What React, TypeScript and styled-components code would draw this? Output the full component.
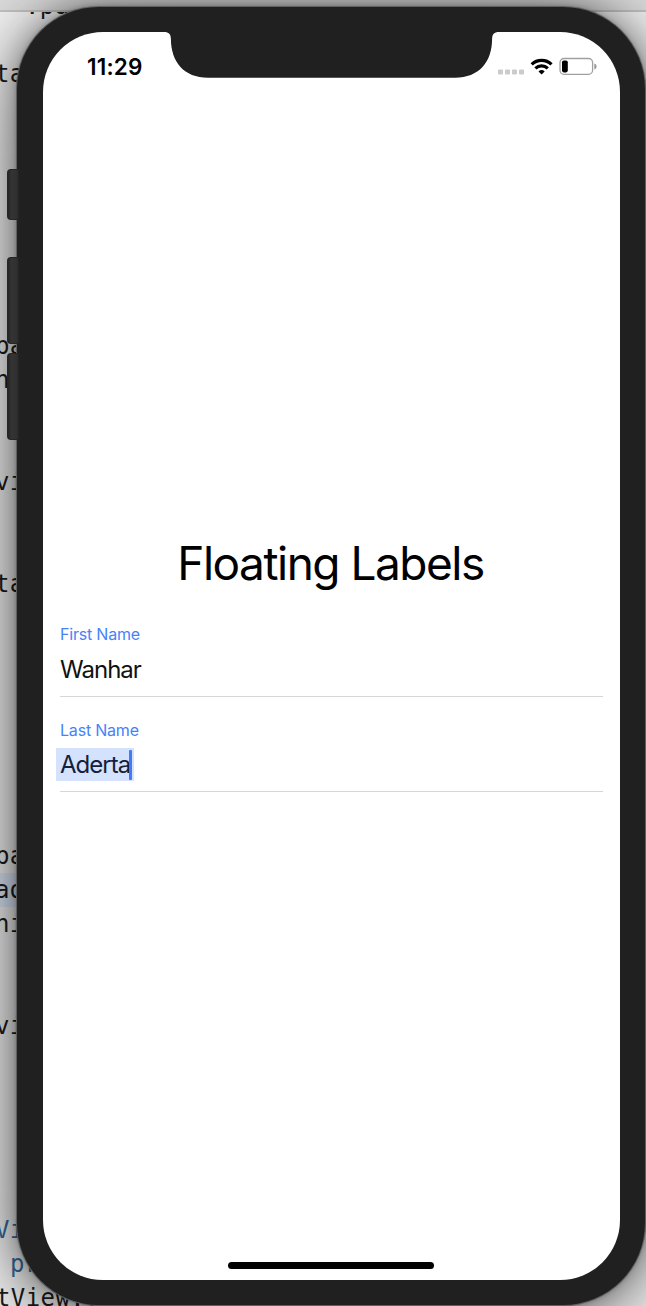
import React from "react";
import styled, { createGlobalStyle } from "styled-components";

const GlobalStyle = createGlobalStyle`
  * { box-sizing: border-box; }
  body { margin: 0; background: #fff; font-family: Inter, "Liberation Sans", sans-serif; }
`;

const Desktop = styled.main`
  position: relative;
  width: 646px;
  height: 1306px;
  overflow: hidden;
  background: #f4f4f4;
`;

const Editor = styled.div`
  height: 1306px;
  display: flex;
  flex-direction: column;
  overflow: hidden;
`;

const EditorBar = styled.div`
  flex: none;
  height: 12px;
  background: #dedede;
  border-bottom: 2px solid #c4c4c4;
`;

const Code = styled.div`
  flex: none;
  margin-top: -23px;
  clip-path: inset(23px 0 0 0);
`;

const CodeLine = styled.div<{ $indent?: number; $active?: boolean; $keyword?: boolean }>`
  height: 34px;
  padding-left: ${(p) => p.$indent ?? 0}px;
  margin-left: -5px;
  background: ${(p) => (p.$active ? "#dfebfb" : "transparent")};
  color: ${(p) => (p.$keyword ? "#326d9f" : "#1c1c1c")};
  font: 24px/34px "DejaVu Sans Mono", monospace;
  letter-spacing: 0.4px;
  white-space: pre;
`;

const Phone = styled.section`
  position: absolute;
  left: 17px;
  top: 7px;
  width: 628px;
  height: 1298px;
  padding: 25px 25px 25px 26px;
  border-radius: 82px;
  background: #202020;
  box-shadow: 0 0 0 1px #606060, 0 0 5px rgba(0, 0, 0, 0.3), 0 0 36px rgba(0, 0, 0, 0.42),
    0 16px 100px rgba(0, 0, 0, 0.5);
`;

const SideButton = styled.i<{ $top: number; $height: number }>`
  position: absolute;
  left: -10px;
  top: ${(p) => p.$top}px;
  width: 12px;
  height: ${(p) => p.$height}px;
  border-radius: 4px 0 0 4px;
  background: linear-gradient(90deg, #242424, #343434 30%, #303030 80%, #222);
  border: 1px solid #252525;
  border-right: 0;
`;

const Screen = styled.div`
  position: relative;
  height: 100%;
  border-radius: 60px;
  background: #fff;
  overflow: hidden;
  display: flex;
  flex-direction: column;
  align-items: center;
`;

const Notch = styled.svg`
  position: absolute;
  left: 121px;
  top: 0;
`;

const StatusBar = styled.header`
  width: 100%;
  height: 70px;
  padding: 0 23px 0 44px;
  display: flex;
  justify-content: space-between;
  align-items: center;
`;

const Clock = styled.time`
  font-size: 22.5px;
  line-height: 28px;
  font-weight: 600;
  letter-spacing: 0.2px;
  margin-top: -1px;
`;

const Title = styled.h1`
  margin: 433px 2px 0 0;
  height: 56px;
  font-size: 46px;
  line-height: 56px;
  font-weight: 400;
  letter-spacing: -1.5px;
  white-space: nowrap;
  color: #000;
`;

const Form = styled.form`
  width: 543px;
  margin-top: 31px;
  display: flex;
  flex-direction: column;
  gap: 21px;
`;

const Field = styled.div`
  height: 75px;
  border-bottom: 1px solid #d6d6d6;

  & + & {
    height: 74px;
  }
`;

const Label = styled.div`
  height: 24px;
  font-size: 16px;
  line-height: 24px;
  letter-spacing: -0.2px;
  color: #4682fa;
`;

const Value = styled.div<{ $selected?: boolean }>`
  position: relative;
  width: max-content;
  height: 33px;
  margin: ${(p) => (p.$selected ? 6 : 7)}px 0 0 -4px;
  padding: 0 4px;
  font-size: 24px;
  line-height: 34px;
  letter-spacing: -0.98px;
  background: ${(p) => (p.$selected ? "#d4e2fd" : "transparent")};
  color: ${(p) => (p.$selected ? "#15203a" : "#111")};
`;

const Caret = styled.i`
  position: absolute;
  right: 2px;
  top: 2px;
  width: 3px;
  height: 30px;
  border-radius: 1px;
  background: #437afa;
`;

const HomeIndicator = styled.div`
  width: 206px;
  height: 7px;
  margin: auto 1px 11px 0;
  border-radius: 4px;
  background: #000;
`;

const code: Record<number, { text: string; indent?: number; active?: boolean; keyword?: boolean }> = {
  0: { text: ".pa", indent: 30 },
  2: { text: "ta" },
  10: { text: "ba" },
  11: { text: "n" },
  14: { text: "vi" },
  17: { text: "ta" },
  25: { text: "ba" },
  26: { text: "ad", active: true },
  27: { text: "ni" },
  30: { text: "vi" },
  36: { text: "Vi", keyword: true },
  37: { text: "pr", indent: 15, keyword: true },
  38: { text: "tView.firstName: $lastName", indent: 1 },
};

const StatusIcons = () => (
  <svg width="100" height="20" viewBox="497 57 100 20" aria-hidden="true">
    <g fill="#cbcbcb">
      {[498, 505, 512, 519].map((x) => (
        <rect key={x} x={x} y="69.4" width="5" height="5" rx="1" />
      ))}
    </g>
    <g fill="none" stroke="#000" strokeWidth="3.2">
      <path d="M531.7 64.3a14.2 14.2 0 0 1 19.8 0" />
      <path d="M535.4 68.4a9 9 0 0 1 12.4 0" />
    </g>
    <path d="M541.6 74.5l-3.1-3.1a4.5 4.5 0 0 1 6.2 0z" />
    <rect x="560" y="58.5" width="32.6" height="15.8" rx="4" fill="none" stroke="#a0a0a0" strokeWidth="1.3" />
    <rect x="562" y="60.4" width="5.8" height="12" rx="1.8" />
    <path d="M594.3 63.4a3.1 3.1 0 0 1 0 6z" fill="#999" />
  </svg>
);

export default function App() {
  return (
    <>
      <GlobalStyle />
      <Desktop>
        <Editor>
          <EditorBar />
          <Code>
            {Array.from({ length: 39 }, (_, i) => (
              <CodeLine key={i} $indent={code[i]?.indent} $active={code[i]?.active} $keyword={code[i]?.keyword}>
                {code[i]?.text}
              </CodeLine>
            ))}
          </Code>
        </Editor>
        <Phone>
          <SideButton $top={162} $height={51} />
          <SideButton $top={250} $height={87} />
          <SideButton $top={346} $height={87} />
          <Screen>
            <StatusBar>
              <Clock>11:29</Clock>
              <StatusIcons />
            </StatusBar>
            <Notch width="335" height="47" viewBox="164 32 335 47" aria-hidden="true">
              <path
                d="M164 32C169 32 170.7 34 170.9 39C171 62 184 77.7 208 77.7H455C479 77.7 492 62 492.1 39C492.3 34 494 32 499 32Z"
                fill="#202020"
              />
            </Notch>
            <Title>Floating Labels</Title>
            <Form>
              <Field>
                <Label>First Name</Label>
                <Value>Wanhar</Value>
              </Field>
              <Field>
                <Label>Last Name</Label>
                <Value $selected>
                  Aderta
                  <Caret />
                </Value>
              </Field>
            </Form>
            <HomeIndicator />
          </Screen>
        </Phone>
      </Desktop>
    </>
  );
}
